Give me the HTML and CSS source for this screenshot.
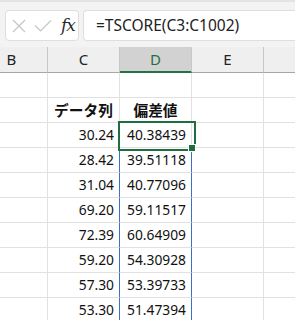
FILE: index.html
```html
<!DOCTYPE html>
<html lang="ja">
<head>
<meta charset="utf-8">
<link rel="stylesheet" href="styles.css">
</head>
<body>
<div class="app">
  <div class="fbar">
    <div class="fbtns">
      <svg class="ic" width="14" height="14" viewBox="0 0 14 14"><path d="M1 1 L13 13 M13 1 L1 13" stroke="#c4c4c4" stroke-width="1.1" fill="none"/></svg>
      <svg class="ic ic-chk" width="18" height="14" viewBox="0 0 18 14"><path d="M1 6.5 L6.5 12 L17 1.5" stroke="#c4c4c4" stroke-width="1.1" fill="none"/></svg>
      <span class="fx">fx</span>
    </div>
    <div class="finput">=TSCORE(C3:C1002)</div>
  </div>
  <div class="sheet">
    <div class="hd">B</div><div class="hd">C</div><div class="hd sel">D</div><div class="hd">E</div><div class="hd last"></div>

    <div class="c"></div><div class="c"></div><div class="c"></div><div class="c"></div><div class="c last"></div>

    <div class="c"></div><div class="c th">データ列</div><div class="c th">偏差値</div><div class="c"></div><div class="c last"></div>

    <div class="c"></div><div class="c num">30.24</div><div class="c num act">40.38439</div><div class="c"></div><div class="c last"></div>
    <div class="c"></div><div class="c num rl">28.42</div><div class="c num rr">39.51118</div><div class="c"></div><div class="c last"></div>
    <div class="c"></div><div class="c num rl">31.04</div><div class="c num rr">40.77096</div><div class="c"></div><div class="c last"></div>
    <div class="c"></div><div class="c num rl">69.20</div><div class="c num rr">59.11517</div><div class="c"></div><div class="c last"></div>
    <div class="c"></div><div class="c num rl">72.39</div><div class="c num rr">60.64909</div><div class="c"></div><div class="c last"></div>
    <div class="c"></div><div class="c num rl">59.20</div><div class="c num rr">54.30928</div><div class="c"></div><div class="c last"></div>
    <div class="c"></div><div class="c num rl">57.30</div><div class="c num rr">53.39733</div><div class="c"></div><div class="c last"></div>
    <div class="c"></div><div class="c num rl">53.30</div><div class="c num rr">51.47394</div><div class="c"></div><div class="c last"></div>
  </div>
</div>
</body>
</html>
```

FILE: styles.css
```css
* { box-sizing: border-box; }
html, body { margin: 0; padding: 0; background: #fff; }
.app { width: 295px; height: 320px; overflow: hidden; font-family: "Noto Sans CJK JP", "Noto Sans", sans-serif; }

.fbar {
  height: 47px;
  background: #f3f3f3;
  border-top: 2px solid #e4e4e4;
  padding: 8px 0 0 5px;
  display: flex;
  gap: 4px;
}
.fbtns {
  width: 74px;
  height: 31px;
  background: #fff;
  border: 1px solid #dedede;
  border-radius: 4px;
  display: flex;
  align-items: center;
  padding-left: 6px;
}
.ic { display: block; }
.ic-chk { margin-left: 8px; margin-top: 1px; }
.fx {
  margin-left: 9px;
  font-family: "DejaVu Serif", "Liberation Serif", serif;
  font-style: italic;
  font-size: 17px;
  color: #2a2a2a;
  line-height: 1;
  letter-spacing: -1px;
}
.finput {
  flex: 1;
  height: 31px;
  background: #fff;
  border: 1px solid #dedede;
  border-right: none;
  border-radius: 4px 0 0 4px;
  padding-left: 12px;
  font-family: "Noto Sans", sans-serif;
  font-size: 15.5px;
  line-height: 28px;
  color: #222;
}

.sheet {
  display: grid;
  width: 319px;
  margin-left: -24px;
  grid-template-columns: 72px 72px 72px 72px 1fr;
  grid-template-rows: 26px;
  grid-auto-rows: 25px;
}
.hd {
  background: #efefef;
  border-right: 1px solid #c8c8c8;
  border-bottom: 1px solid #a6a6a6;
  text-align: center;
  font-family: "Noto Sans", sans-serif;
  font-size: 15px;
  line-height: 25px;
  color: #222;
}
.hd.sel {
  background: #d2d2d2;
  color: #1e7145;
  border-bottom: 2px solid #217346;
  line-height: 24px;
}
.c {
  border-right: 1px solid #e1e1e1;
  border-bottom: 1px solid #e1e1e1;
  font-family: "Noto Sans", sans-serif;
  font-size: 13.8px;
  line-height: 24px;
  color: #111;
}
.last { border-right: none; }
.th { text-align: center; font-weight: bold; font-size: 14.7px; font-family: "Noto Sans CJK JP", sans-serif; }
.num { text-align: right; padding-right: 5px; }
.rl { border-right-color: #3d6fc7; }
.rr { border-right-color: #3d6fc7; }
.act { position: relative; }
.act::after {
  content: "";
  position: absolute;
  left: -2px;
  top: -2px;
  width: 74px;
  height: 26px;
  border: 2px solid #1e6e42;
}
.act::before {
  content: "";
  position: absolute;
  left: 68px;
  top: 21px;
  width: 6px;
  height: 6px;
  background: #1e6e42;
  border: 1px solid #fff;
  z-index: 1;
}
```
